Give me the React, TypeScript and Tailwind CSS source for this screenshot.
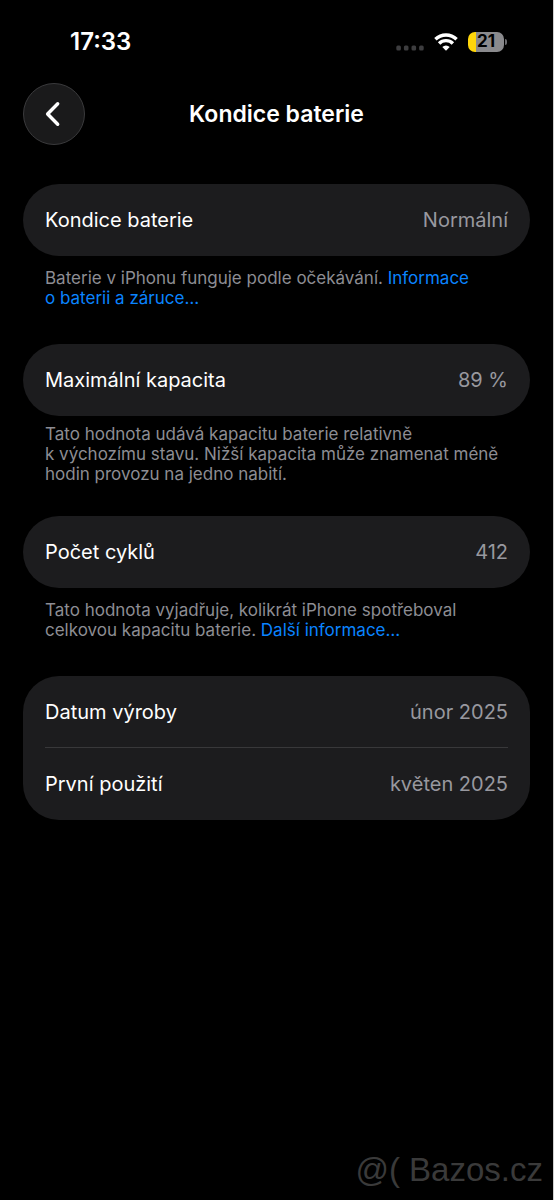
import React from 'react';

interface Row {
  label: string;
  value: string;
}

interface SectionProps {
  rows: Row[];
  children?: React.ReactNode;
}

function Section({ rows, children }: SectionProps) {
  return (
    <section>
      <dl className="rounded-[36px] bg-[#1c1c1e] px-[22px]">
        {rows.map((row, index) => (
          <div
            key={row.label}
            className={`flex h-[72px] items-center justify-between text-[20px] ${
              index < rows.length - 1 ? 'border-b border-[#38383a]' : ''
            }`}
          >
            <dt className="text-white">{row.label}</dt>
            <dd className="text-[#98989f]">{row.value}</dd>
          </div>
        ))}
      </dl>
      {children}
    </section>
  );
}

function StatusBar() {
  return (
    <div className="flex h-[83px] items-center justify-between pr-[46px] pl-[70px]">
      <time className="text-[24px] font-semibold">17:33</time>
      <div className="flex items-center gap-[10px]">
        <svg width="28" height="6" viewBox="0 0 28 6" className="mt-3" fill="#3d3d3f">
          <rect x="0.3" y="0.5" width="4.6" height="5" rx="1.5" />
          <rect x="7.9" y="0.5" width="4.6" height="5" rx="1.5" />
          <rect x="15.5" y="0.5" width="4.6" height="5" rx="1.5" />
          <rect x="23.1" y="0.5" width="4.6" height="5" rx="1.5" />
        </svg>
        <svg width="24" height="18" viewBox="0 0 24 18" fill="none" stroke="#fff">
          <path d="M1.4 6.3a15.2 15.2 0 0 1 21.2 0" strokeWidth="3.4" />
          <path d="M5.1 10.5a9.8 9.8 0 0 1 13.800 0" strokeWidth="3.4" />
          <path d="M12 17.8 8.300 14.1a5.300 5.300 0 0 1 7.400 0z" fill="#fff" stroke="none" />
        </svg>
        <div className="flex items-center gap-px">
          <div className="flex h-5 w-9 items-center justify-center rounded-[7px] bg-linear-to-r from-[#ffd60a] from-22% to-[#8a8a8d] to-22% text-[17px] font-bold text-black">
            21
          </div>
          <div className="h-[6px] w-[2px] rounded-r-full bg-[#6c6c70]" />
        </div>
      </div>
    </div>
  );
}

export default function App() {
  return (
    <div className="flex min-h-screen flex-col border-r border-[#d0d0d0] bg-black font-['Inter','Liberation_Sans',sans-serif] text-white">
      <StatusBar />

      <header className="grid grid-cols-[62px_1fr_62px] items-center px-[23px]">
        <button
          type="button"
          aria-label="Zpět"
          className="flex size-[62px] items-center justify-center rounded-full border border-[#3a3a3c] bg-[#1a1a1b]"
        >
          <svg width="18" height="26" viewBox="0 0 18 26" fill="none" stroke="#fff" strokeWidth="3.4">
            <path d="M12.7 2.7 2.600 13l10.100 10.300" strokeLinecap="round" strokeLinejoin="round" />
          </svg>
        </button>
        <h1 className="text-center text-[23px] font-semibold">Kondice baterie</h1>
      </header>

      <main className="flex flex-col gap-8 px-[23px] pt-[39px]">
        <Section rows={[{ label: 'Kondice baterie', value: 'Normální' }]}>
          <p className="px-[22px] pt-3 pb-1 text-[17px] leading-5 text-[#8d8d93]">
            Baterie v&nbsp;iPhonu funguje podle očekávání.{' '}
            <a href="#zaruka" className="text-[#0a84ff]">
              Informace o&nbsp;baterii a&nbsp;záruce…
            </a>
          </p>
        </Section>

        <Section rows={[{ label: 'Maximální kapacita', value: '89 %' }]}>
          <p className="px-[22px] pt-2 text-[17px] leading-5 text-[#8d8d93]">
            Tato hodnota udává kapacitu baterie relativně k&nbsp;výchozímu stavu. Nižší kapacita
            může znamenat méně hodin provozu na jedno nabití.
          </p>
        </Section>

        <Section rows={[{ label: 'Počet cyklů', value: '412' }]}>
          <p className="px-[22px] pt-3 pb-1 text-[17px] leading-5 text-[#8d8d93]">
            Tato hodnota vyjadřuje, kolikrát iPhone spotřeboval celkovou kapacitu baterie.{' '}
            <a href="#cykly" className="text-[#0a84ff]">
              Další informace…
            </a>
          </p>
        </Section>

        <Section
          rows={[
            { label: 'Datum výroby', value: 'únor 2025' },
            { label: 'První použití', value: 'květen 2025' },
          ]}
        />
      </main>

      <footer className="mt-auto px-[10px] pb-3 text-right font-['Liberation_Sans',sans-serif] text-[33px] leading-9 text-[#3a3a3a]">
        @( Bazos.cz
      </footer>
    </div>
  );
}
